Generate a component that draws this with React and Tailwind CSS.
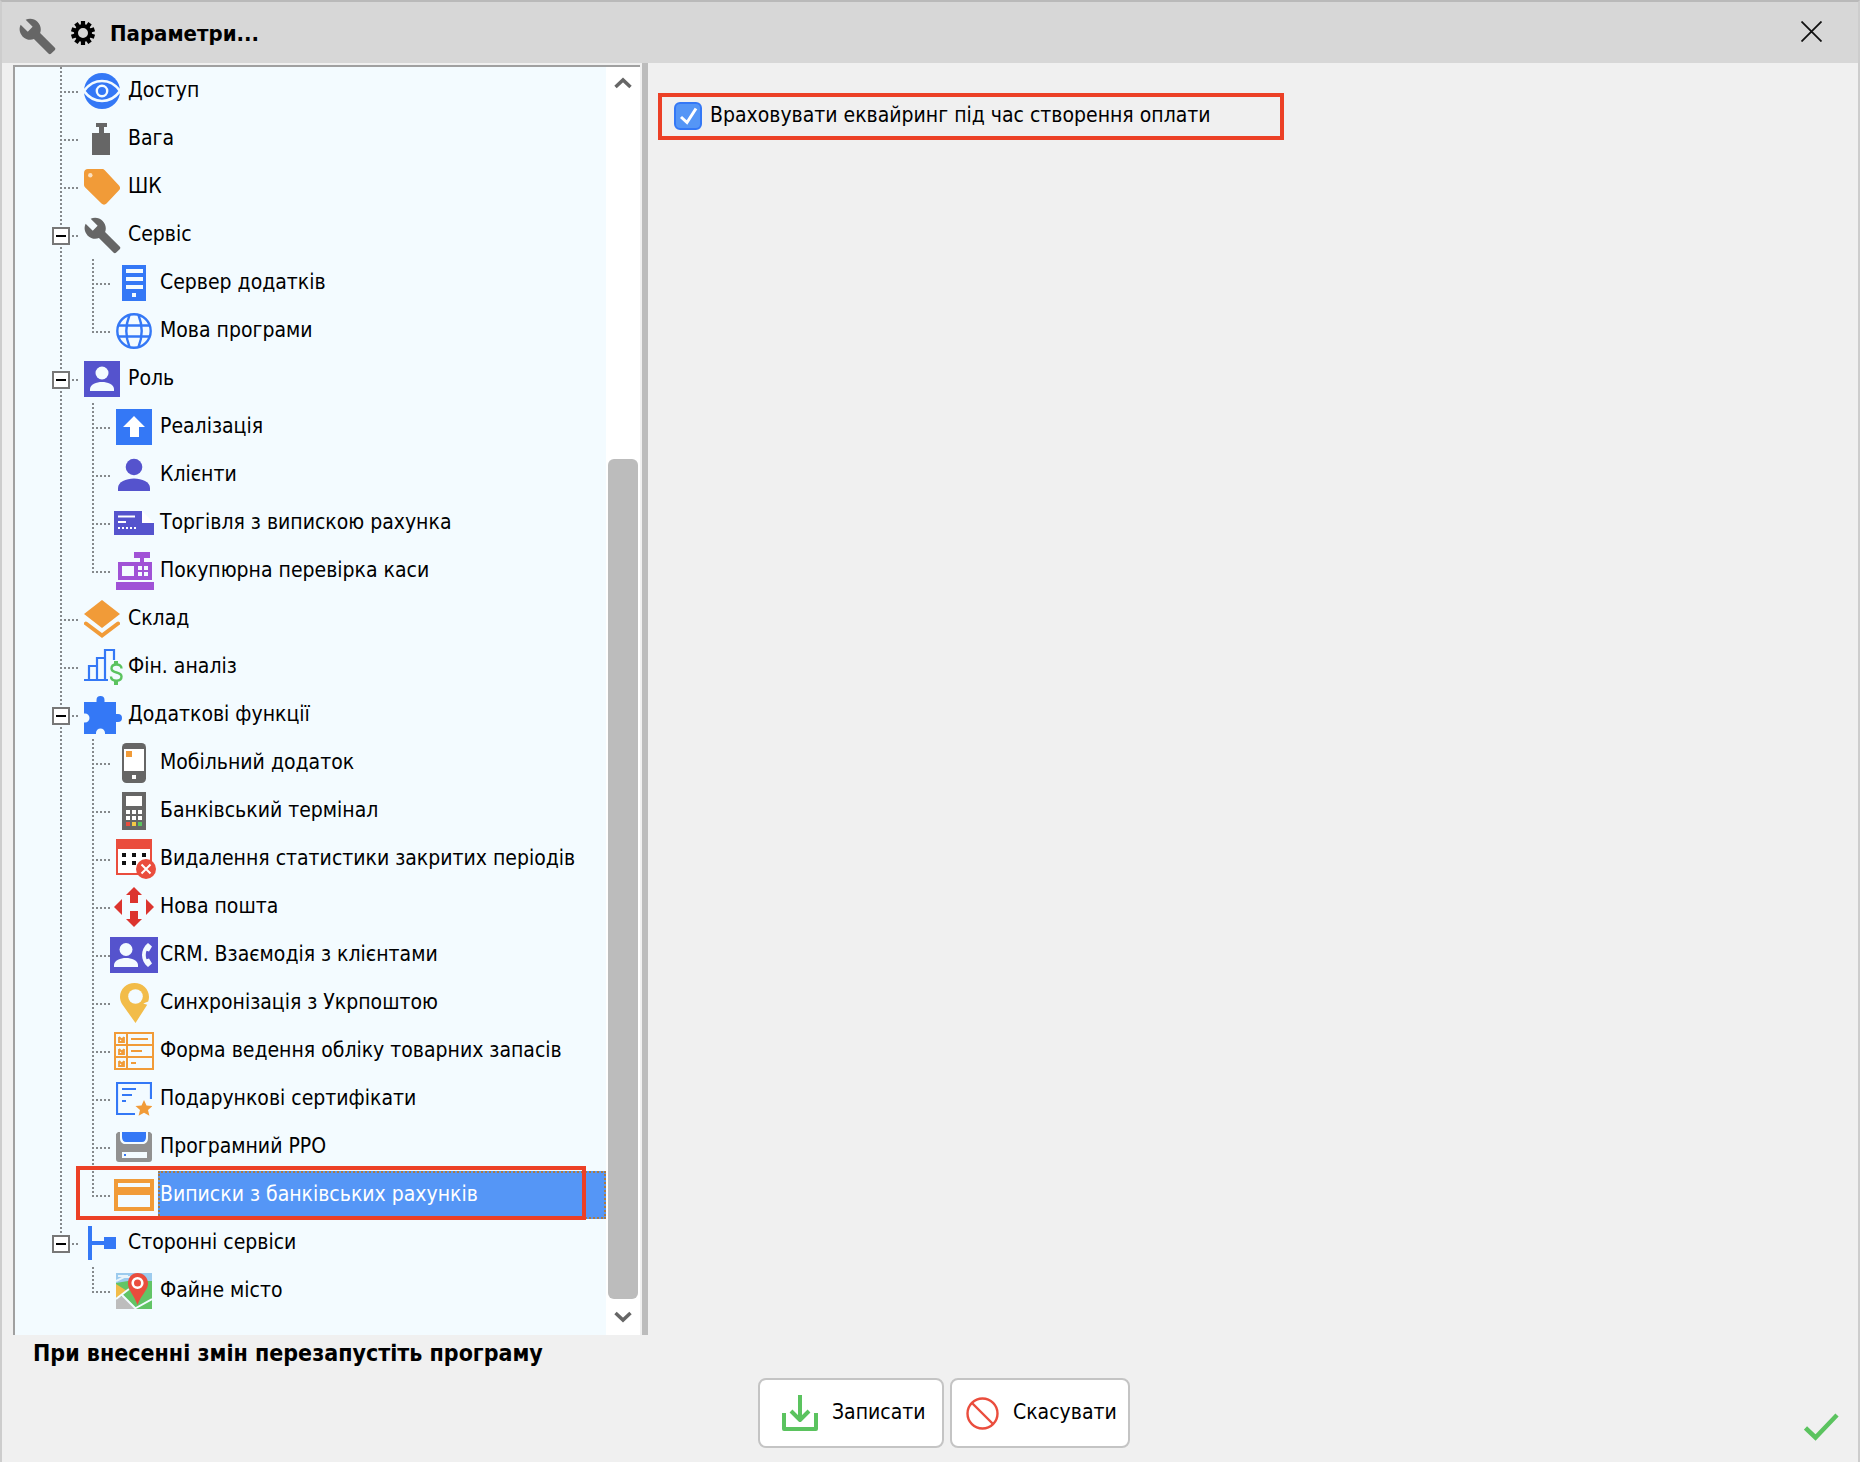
import { useState } from 'react';

const BLUE = '#3478f6';
const PURPLE = '#5553cd';
const ORANGE = '#f19b38';
const GRAY = '#666666';
const RED = '#ea4d3d';
const GREEN = '#5bc35f';
const PAPER = '#f3fbff';

// Tree icons
function WrenchIcon() {
  return (
    <svg width="37" height="37" viewBox="0.6 0.6 22.8 22.8">
      <path
        fill={GRAY}
        d="M22.7 19l-9.1-9.1c.9-2.3.4-5-1.5-6.9-2-2-5-2.4-7.4-1.3L9 6 6 9 1.6 4.7C.4 7.1.9 10.1 2.9 12.1c1.9 1.9 4.6 2.4 6.9 1.5l9.1 9.1c.4.4 1 .4 1.4 0l2.3-2.3c.5-.4.5-1.1.1-1.4z"
      />
    </svg>
  );
}

function EyeIcon() {
  return (
    <svg width="36" height="36" viewBox="0 0 36 36">
      <circle cx="18" cy="18" r="18" fill={BLUE} />
      <path d="M0 18C5 11 11 8 18 8s13 3 18 10c-5 7-11 10-18 10S5 25 0 18z" fill={BLUE} stroke={PAPER} strokeWidth="2.6" />
      <circle cx="18" cy="18" r="5.2" fill={BLUE} stroke={PAPER} strokeWidth="2.4" />
    </svg>
  );
}

function WeightIcon() {
  return (
    <svg width="36" height="36" viewBox="0 0 36 36">
      <path d="M12 2h11v4h-3v6h6v22H8V12h7V6h-3z" fill={GRAY} />
    </svg>
  );
}

function TagIcon() {
  return (
    <svg width="36" height="36" viewBox="0 0 36 36">
      <path d="M4 0h14c1.200 0 2 .4 2.800 1.200L35 16.500c1.400 1.500 1.400 3.400 0 4.800L22.500 34.500c-1.500 1.500-3.500 1.500-5 0L1.200 18.500C.4 17.700 0 17 0 16V4c0-2.400 1.600-4 4-4z" fill={ORANGE} />
      <circle cx="6.300" cy="6.300" r="2.200" fill="#fbe0c0" />
    </svg>
  );
}

function ServerIcon() {
  return (
    <svg width="24" height="36" viewBox="0 0 24 36">
      <path d="M0 0h24v36H0z" fill={BLUE} />
      <path d="M4 4h17v4H4zM4 12h17v4H4zM4 20h17v4H4zM10 28h4v4h-4z" fill={PAPER} />
    </svg>
  );
}

function GlobeIcon() {
  return (
    <svg width="36" height="36" viewBox="0 0 36 36" fill="none" stroke={BLUE} strokeWidth="2.400">
      <circle cx="18" cy="18" r="16.700" />
      <path d="M13.500 2C9.500 12 9.500 24 13.500 34M22.500 2c4 10 4 22 0 32M3 12.500h30M3 23.500h30" />
    </svg>
  );
}

function RoleIcon() {
  return (
    <svg width="36" height="36" viewBox="0 0 36 36">
      <path d="M0 0h36v36H0z" fill={PURPLE} />
      <circle cx="18" cy="12" r="6.500" fill={PAPER} />
      <path d="M6 30v-2c0-4.500 6.500-7 12-7s12 2.500 12 7v2z" fill={PAPER} />
    </svg>
  );
}

function ArrowUpIcon() {
  return (
    <svg width="36" height="36" viewBox="0 0 36 36">
      <path d="M0 0h36v36H0z" fill={BLUE} />
      <path d="M18 7l11 11h-6v10h-9V18H7z" fill="#fff" />
    </svg>
  );
}

function PersonIcon() {
  return (
    <svg width="36" height="36" viewBox="0 0 36 36">
      <circle cx="18" cy="10" r="8.300" fill={PURPLE} />
      <path d="M2 34v-3c0-6 8-9.500 16-9.500S34 25 34 31v3z" fill={PURPLE} />
    </svg>
  );
}

function ReceiptIcon() {
  return (
    <svg width="40" height="24" viewBox="0 0 40 24">
      <path d="M28 0l12 12H28z" fill="#fff" />
      <path d="M0 0h28v12h12v12H0z" fill={PURPLE} />
      <path d="M4 5.500h17M4 11h8" stroke="#fff" strokeWidth="2" />
      <path d="M4 17h19" stroke="#fff" strokeWidth="2" strokeDasharray="2 2" />
    </svg>
  );
}

function RegisterIcon() {
  return (
    <svg className="ml-0.5" width="38" height="38" viewBox="0 0 38 38">
      <path d="M18 0h16v6h-6v4h8v18H2V10h22V6h-6zM0 30h38v8H0z" fill="#a052d6" />
      <path d="M6 14h12v10H6zM22 14h4v4h-4zM28 14h4v4h-4zM22 20h4v4h-4zM28 20h4v4h-4z" fill={PAPER} />
    </svg>
  );
}

function LayersIcon() {
  return (
    <svg width="36" height="38" viewBox="0 0 36 38">
      <path d="M18 0l18 14-18 14L0 14z" fill={ORANGE} />
      <path d="M2 23.500l16 12 16-12" fill="none" stroke={ORANGE} strokeWidth="4" strokeLinecap="round" />
    </svg>
  );
}

function ChartIcon() {
  return (
    <svg className="ml-0.5" width="39" height="36" viewBox="0 0 39 36" fill="none">
      <path d="M0 31h24M5 31V17h8M13 31V9h8M21 31V1h9v10" stroke={BLUE} strokeWidth="2.200" />
      <path d="M37.500 19.500c0-3-2-4-5-4s-5 1.200-5 4c0 5.500 10 2.500 10 8 0 3-2 4.200-5 4.200s-5.500-1.200-5.500-4.200" stroke={GREEN} strokeWidth="2.400" />
      <path d="M32 12v4M32 32v4" stroke={GREEN} strokeWidth="4" />
    </svg>
  );
}

function PuzzleIcon() {
  return (
    <svg className="ml-0.5" width="38" height="38" viewBox="0 0 38 38">
      <path d="M0 6h12.500V4a4 4 0 0 1 8 0v2H32v12h2a4 4 0 0 1 0 8h-2v12H21v-1a4.500 4.500 0 0 0-9 0v1H0V26.500h1a4.500 4.500 0 0 0 0-9H0z" fill={BLUE} />
    </svg>
  );
}

function PhoneIcon() {
  return (
    <svg width="24" height="40" viewBox="0 0 24 40">
      <rect width="24" height="40" rx="4.500" fill={GRAY} />
      <path d="M2 6h20v22H2zM10 32h4v4h-4z" fill="#fff" />
      <path d="M4 8h6v6H4z" fill={ORANGE} />
    </svg>
  );
}

function TerminalIcon() {
  return (
    <svg width="24" height="38" viewBox="0 0 24 38">
      <path d="M0 0h24v38H0z" fill={GRAY} />
      <path d="M4 4h16v10H4zM4 18h4v4H4zM10 18h4v4h-4zM16 18h4v4h-4zM4 24h4v4H4zM10 24h4v4h-4zM16 24h4v4h-4z" fill="#fff" />
      <path d="M4 30h4v4H4z" fill={RED} />
      <path d="M10 30h4v4h-4z" fill="#f5c945" />
      <path d="M16 30h4v4h-4z" fill={GREEN} />
    </svg>
  );
}

function CalendarIcon() {
  return (
    <svg className="ml-1" width="40" height="40" viewBox="0 0 40 40">
      <path d="M1 1h34v34H1z" fill="#fff" stroke={RED} strokeWidth="2" />
      <path d="M0 0h36v10H0z" fill={RED} />
      <path d="M6 14h4v4H6zM16 14h4v4h-4zM26 14h4v4h-4zM6 22h4v4H6zM16 22h4v4h-4z" fill="#111" />
      <circle cx="30" cy="30" r="10" fill={RED} />
      <path d="M25.500 25.500l9 9M34.500 25.500l-9 9" stroke="#fff" strokeWidth="2" />
    </svg>
  );
}

function PostIcon() {
  return (
    <svg width="40" height="40" viewBox="0 0 40 40">
      <path d="M20 0l8 8h-4v8h-8V8h-4zM20 40l8-8h-4v-8h-8v8h-4zM0 20l8-8v16zM40 20l-8-8v16z" fill="#dc342e" />
    </svg>
  );
}

function CrmIcon() {
  return (
    <svg width="48" height="36" viewBox="0 0 48 36">
      <path d="M0 0h48v36H0z" fill={PURPLE} />
      <circle cx="16" cy="12.500" r="6.500" fill={PAPER} />
      <path d="M4 30v-2c0-4.500 6.500-7 12-7s12 2.500 12 7v2z" fill={PAPER} />
      <path d="M38 6c-8 6-8 18 0 24l4-3.500-3-5-2.500.8c-1-2.500-1-6 0-8.500l2.500.7 3-5z" fill={PAPER} />
    </svg>
  );
}

function PinIcon() {
  return (
    <svg width="29" height="40" viewBox="0 0 29 40">
      <path d="M14.500 0C22.500 0 29 6 29 14c0 1.500-.3 3-.8 4.500l-5 2 4 1.200L15.500 40 2 21C.7 18.800 0 16.500 0 14 0 6 6.500 0 14.500 0z" fill="#f2bc49" />
      <circle cx="15.500" cy="13.500" r="7.300" fill={PAPER} />
    </svg>
  );
}

function FormIcon() {
  return (
    <svg width="40" height="38" viewBox="0 0 40 38" fill="none" stroke={ORANGE} strokeWidth="2">
      <path d="M1 1h38v36H1zM1 13h38M1 25h38M13 1v36" />
      <path d="M17 7h17M17 19h11M17 31h5" />
      <path d="M5 5v5h5V5M5 5l3 3 2-3M5 17v5h5v-5M5 17l3 3 2-3M5 29v5h5v-5M5 29l3 3 2-3" strokeWidth="1.800" />
    </svg>
  );
}

function CertificateIcon() {
  return (
    <svg width="36" height="34" viewBox="0 0 36 34">
      <path d="M35 17V1H1v31h18M6 7h14M6 13h10M6 19h4" fill="none" stroke={BLUE} strokeWidth="2.200" />
      <path d="M28 18l2.500 5.400 6 .6-4.500 4 1.400 5.800L28 30.700l-5.400 3.100L24 28l-4.500-4 6-.6z" fill={ORANGE} />
    </svg>
  );
}

function FloppyIcon() {
  return (
    <svg width="36" height="30" viewBox="0 0 36 30">
      <path d="M2 0h2v6c0 3.500 2 6 5 6h18c3 0 5-2.500 5-6V0h2l2 2v25c0 2-1 3-3 3H3c-2 0-3-1-3-3V2z" fill="#919191" />
      <path d="M6 0h24v5c0 3-1.500 5-4 5H10c-2.500 0-4-2-4-5z" fill={BLUE} />
      <path d="M6 20h25v6H6z" fill={PAPER} />
      <path d="M8 22h2v2H8z" fill={BLUE} />
    </svg>
  );
}

function CardIcon() {
  return (
    <svg width="40" height="32" viewBox="0 0 40 32">
      <path d="M0 0h40v32H0z" fill={ORANGE} />
      <path d="M4 4h32v4H4zM4 16h32v12H4z" fill={PAPER} />
    </svg>
  );
}

function LinkIcon() {
  return (
    <svg width="36" height="34" viewBox="0 0 36 34">
      <path d="M4 0h4v34H4zM8 15h13v4H8zM20 11h12v12H20z" fill={BLUE} />
    </svg>
  );
}

function MapIcon() {
  return (
    <svg width="36" height="36" viewBox="0 0 36 36">
      <path d="M0 0h36v36H0z" fill="#62c466" />
      <path d="M0 0h36v8L12 8 0 10z" fill="#9ccbee" />
      <path d="M0 8l8-4h6M2 3h10" stroke="#e8f4fb" strokeWidth="2" fill="none" />
      <path d="M0 11l11 7L0 25z" fill="#f2bc49" />
      <path d="M0 25l7-2 12 13H0z" fill="#bdbdbd" />
      <path d="M0 26L13 16M6 22l14 14M20 35l16-9" stroke={PAPER} strokeWidth="2" />
      <path d="M21.500 0C27.500 0 32 4.500 32 10.500 32 17 25 22 21.500 32 18 22 12 17 12 10.500 12 4.500 16 0 21.500 0z" fill={RED} />
      <circle cx="21.500" cy="10" r="4.800" fill={RED} stroke="#fff" strokeWidth="2.600" />
    </svg>
  );
}

const tree = [
  { label: 'Доступ', icon: EyeIcon },
  { label: 'Вага', icon: WeightIcon },
  { label: 'ШК', icon: TagIcon },
  {
    label: 'Сервіс',
    icon: WrenchIcon,
    children: [
      { label: 'Сервер додатків', icon: ServerIcon },
      { label: 'Мова програми', icon: GlobeIcon },
    ],
  },
  {
    label: 'Роль',
    icon: RoleIcon,
    children: [
      { label: 'Реалізація', icon: ArrowUpIcon },
      { label: 'Клієнти', icon: PersonIcon },
      { label: 'Торгівля з випискою рахунка', icon: ReceiptIcon },
      { label: 'Покупюрна перевірка каси', icon: RegisterIcon },
    ],
  },
  { label: 'Склад', icon: LayersIcon },
  { label: 'Фін. аналіз', icon: ChartIcon },
  {
    label: 'Додаткові функції',
    icon: PuzzleIcon,
    children: [
      { label: 'Мобільний додаток', icon: PhoneIcon },
      { label: 'Банківський термінал', icon: TerminalIcon },
      { label: 'Видалення статистики закритих періодів', icon: CalendarIcon },
      { label: 'Нова пошта', icon: PostIcon },
      { label: 'CRM. Взаємодія з клієнтами', icon: CrmIcon },
      { label: 'Синхронізація з Укрпоштою', icon: PinIcon },
      { label: 'Форма ведення обліку товарних запасів', icon: FormIcon },
      { label: 'Подарункові сертифікати', icon: CertificateIcon },
      { label: 'Програмний РРО', icon: FloppyIcon },
      { label: 'Виписки з банківських рахунків', icon: CardIcon, marked: true },
    ],
  },
  {
    label: 'Сторонні сервіси',
    icon: LinkIcon,
    children: [{ label: 'Файне місто', icon: MapIcon }],
  },
];

// Dotted connector in front of a node
function Guide({ last, branch = true, open, onToggle }) {
  const hidden = last && !branch;
  return (
    <div className="relative flex h-12 w-8 shrink-0 pl-[14px]">
      {!hidden && (
        <div
          className={`w-[2px] bg-[repeating-linear-gradient(to_bottom,#85898c_0_2px,transparent_2px_4px)] ${
            last ? 'h-[26px]' : 'h-full'
          }`}
        />
      )}
      {branch && (
        <div className="mt-6 h-[2px] flex-1 bg-[repeating-linear-gradient(to_right,transparent_0_2px,#85898c_2px_4px)]" />
      )}
      {onToggle && (
        <button
          onClick={onToggle}
          aria-label={open ? 'Згорнути' : 'Розгорнути'}
          className="absolute top-4 left-[6px] flex size-[18px] items-center justify-center border-2 border-[#777] bg-white outline-2 outline-[#f3fbff]"
        >
          <span className="h-[2px] w-[10px] bg-black" />
        </button>
      )}
    </div>
  );
}

function Row({ node, selected, onSelect, children }) {
  const Icon = node.icon;
  return (
    <div className="relative flex h-12">
      {children}
      <span className="flex w-12 shrink-0 items-center justify-center">
        <Icon />
      </span>
      <button
        onClick={() => onSelect(node.label)}
        className={`flex-1 border-2 border-dotted text-left whitespace-nowrap ${
          selected ? 'border-[#a87b45] bg-[#5596f6] text-white' : 'border-transparent'
        }`}
      >
        {node.label}
      </button>
      {node.marked && (
        <div className="pointer-events-none absolute -top-[5px] right-5 -bottom-px left-[30px] border-4 border-[#ec4026]" />
      )}
    </div>
  );
}

function Tree() {
  const [closed, setClosed] = useState([]);
  const [selected, setSelected] = useState('Виписки з банківських рахунків');

  const toggle = (label) => {
    setClosed(closed.includes(label) ? closed.filter((l) => l !== label) : [...closed, label]);
  };

  return (
    <ul className="min-w-0 flex-1 bg-[#f3fbff] pb-5 pl-[31px]">
      {tree.map((node, i) => {
        const last = i === tree.length - 1;
        const open = !closed.includes(node.label);
        return (
          <li key={node.label}>
            <Row node={node} selected={selected === node.label} onSelect={setSelected}>
              <Guide last={last} open={open} onToggle={node.children && (() => toggle(node.label))} />
            </Row>
            {node.children && open && (
              <ul>
                {node.children.map((child, j) => (
                  <li key={child.label}>
                    <Row node={child} selected={selected === child.label} onSelect={setSelected}>
                      <Guide last={last} branch={false} />
                      <Guide last={j === node.children.length - 1} />
                    </Row>
                  </li>
                ))}
              </ul>
            )}
          </li>
        );
      })}
    </ul>
  );
}

function ScrollBar() {
  return (
    <div className="flex w-[34px] shrink-0 flex-col items-center bg-white">
      <button aria-label="Вгору" className="flex h-8 w-full items-center justify-center">
        <svg width="18" height="12" viewBox="0 0 18 12" fill="none" stroke="#666" strokeWidth="3.500">
          <path d="M1.500 10L9 3l7.500 7" />
        </svg>
      </button>
      <div className="flex w-full flex-1 flex-col justify-end px-[2px]">
        <div className="h-[70%] rounded-md bg-[#bcbcbc]" />
      </div>
      <button aria-label="Вниз" className="flex h-9 w-full items-center justify-center">
        <svg width="18" height="12" viewBox="0 0 18 12" fill="none" stroke="#666" strokeWidth="3.500">
          <path d="M1.500 2L9 9l7.500-7" />
        </svg>
      </button>
    </div>
  );
}

function Header() {
  return (
    <header className="flex h-[61px] shrink-0 items-center bg-[#d7d7d7] pr-9 pl-[17px]">
      <span className="pt-2">
        <WrenchIcon />
      </span>
      <svg className="ml-[14px]" width="26" height="26" viewBox="-13 -13 26 26">
        <circle r="7" fill="none" stroke="#000" strokeWidth="4" />
        <g stroke="#000" strokeWidth="4.200">
          <path d="M0-12v4M0 8v4" />
          <path d="M0-12v4M0 8v4" transform="rotate(36)" />
          <path d="M0-12v4M0 8v4" transform="rotate(72)" />
          <path d="M0-12v4M0 8v4" transform="rotate(108)" />
          <path d="M0-12v4M0 8v4" transform="rotate(144)" />
        </g>
      </svg>
      <h1 className="ml-[14px] pt-0.5 text-[22px] font-bold">Параметри...</h1>
      <button aria-label="Закрити" className="ml-auto pb-0.5">
        <svg width="21" height="21" viewBox="0 0 21 21" stroke="#111" strokeWidth="1.800">
          <path d="M.5.5l20 20M20.500.5l-20 20" />
        </svg>
      </button>
    </header>
  );
}

function Footer() {
  return (
    <footer className="flex flex-1 flex-col">
      <p className="pt-1 pl-[31px] text-[23px] leading-7 font-bold">При внесенні змін перезапустіть програму</p>
      <div className="flex items-center pt-[11px]">
        <div className="flex flex-1 justify-center gap-[6px] pl-[82px]">
          <button className="flex h-[70px] w-[186px] items-center gap-[14px] rounded-lg border-2 border-[#c4c4c4] bg-white pl-[22px]">
            <svg width="36" height="36" viewBox="0 0 36 36" fill="none" stroke={GREEN} strokeWidth="4">
              <path d="M2 18v16h32V18M18 0v24M9 16l9 9 9-9" strokeLinejoin="round" />
            </svg>
            Записати
          </button>
          <button className="flex h-[70px] w-[180px] items-center gap-[14px] rounded-lg border-2 border-[#c4c4c4] bg-white pl-[14px]">
            <svg width="33" height="33" viewBox="0 0 33 33" fill="none" stroke={RED} strokeWidth="2.400">
              <circle cx="16.500" cy="16.500" r="15" />
              <path d="M6 6l21 21" />
            </svg>
            Скасувати
          </button>
        </div>
        <button aria-label="Готово" className="mr-[19px] pt-7">
          <svg width="35" height="28" viewBox="0 0 35 28" fill="none" stroke={GREEN} strokeWidth="4.500">
            <path d="M1.500 15l10 9.500L33 2" />
          </svg>
        </button>
      </div>
    </footer>
  );
}

export default function App() {
  const [acquiring, setAcquiring] = useState(true);

  return (
    <div className="flex min-h-screen flex-col border-x-2 border-t-2 border-x-[#cdcdcd] border-t-[#b9b9b9] bg-[#f0f0f0] font-['DejaVu_Sans_Condensed','DejaVu_Sans',sans-serif] text-[21px] text-black">
      <Header />
      <main className="flex">
        <div className="flex w-[646px] shrink-0 border-r-[6px] border-[#bcbcbc] pt-[2px] pr-[2px] pl-[11px]">
          <div className="flex flex-1 border-t-2 border-l-2 border-[#a0a0a0]">
            <Tree />
            <ScrollBar />
          </div>
        </div>
        <section className="flex-1 pt-[30px] pl-[10px]">
          <label className="flex h-[47px] w-[626px] items-center gap-2 border-4 border-[#ec4026] pb-0.5 pl-3">
            <span className="grid shrink-0">
              <input
                type="checkbox"
                checked={acquiring}
                onChange={(e) => setAcquiring(e.target.checked)}
                className="peer col-start-1 row-start-1 size-7 appearance-none rounded-md border-2 border-[#3478f6] bg-white checked:bg-[#5596f6]"
              />
              <svg className="pointer-events-none invisible col-start-1 row-start-1 peer-checked:visible" width="28" height="28" viewBox="0 0 28 28" fill="none" stroke="#fff" strokeWidth="3">
                <path d="M7 15l6 5.500 9-14" />
              </svg>
            </span>
            Враховувати еквайринг під час створення оплати
          </label>
        </section>
      </main>
      <Footer />
    </div>
  );
}
